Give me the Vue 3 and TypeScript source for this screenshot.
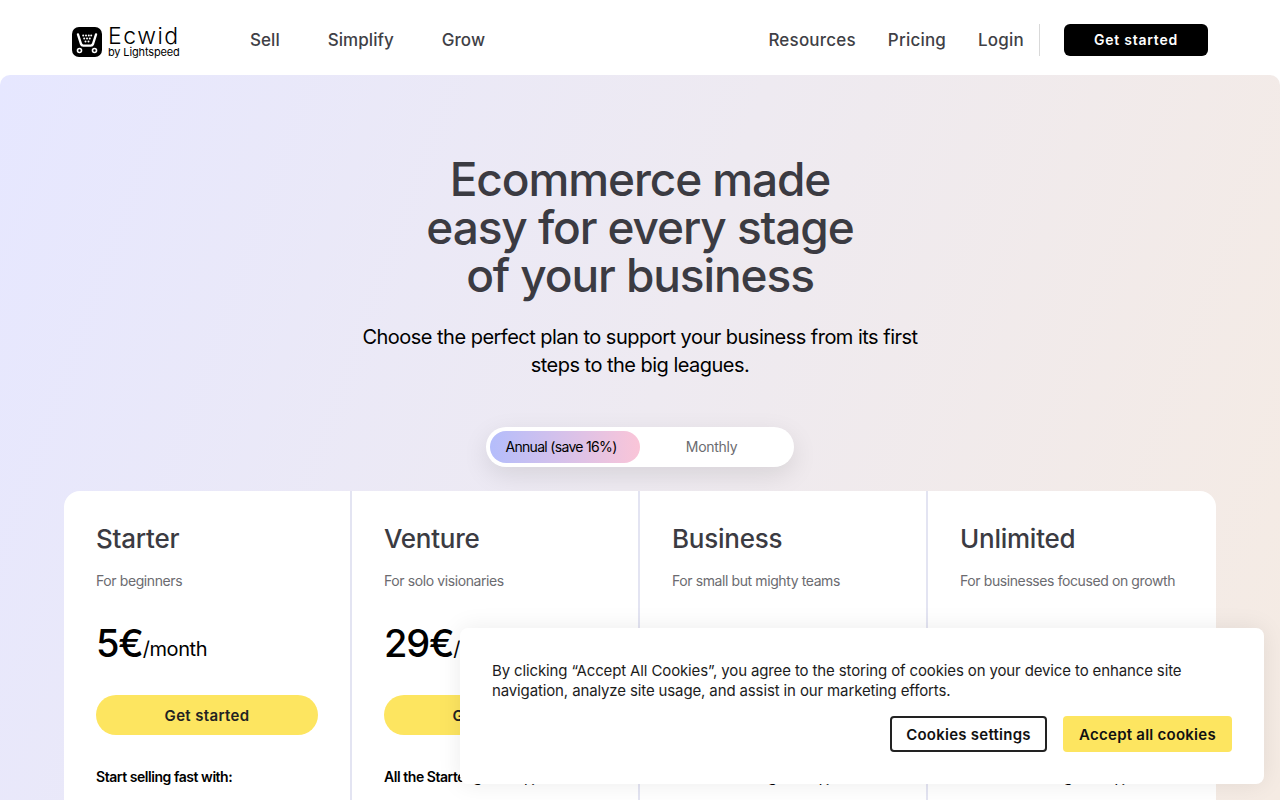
<script setup lang="ts">
interface Plan {
  name: string
  tagline: string
  price: string
  lead: string
}

const plans: Plan[] = [
  { name: 'Starter', tagline: 'For beginners', price: '5€', lead: 'Start selling fast with:' },
  { name: 'Venture', tagline: 'For solo visionaries', price: '29€', lead: 'All the Starter goodies, plus:' },
  { name: 'Business', tagline: 'For small but mighty teams', price: '79€', lead: 'All the Venture goodies, plus:' },
  { name: 'Unlimited', tagline: 'For businesses focused on growth', price: '149€', lead: 'All the Business goodies, plus:' },
]

const leftNav = ['Sell', 'Simplify', 'Grow']
const rightNav = ['Resources', 'Pricing', 'Login']
</script>

<template>
  <div class="page">
    <header class="topbar">
      <a class="logo">
        <svg class="logo-icon" width="30" height="30" viewBox="0 0 30 30">
          <rect width="30" height="30" rx="7" fill="#000" />
          <path d="M6 7.5l3 9.5c.4 1.1 1 1.6 2.2 1.6h7.6c1.2 0 1.8-.5 2.2-1.6l3-9.5" fill="none" stroke="#fff" stroke-width="2.4" stroke-linecap="round" stroke-linejoin="round" />
          <g fill="#fff">
            <circle cx="11.2" cy="8.5" r="1" />
            <circle cx="14" cy="8.5" r="1" />
            <circle cx="16.8" cy="8.5" r="1" />
            <circle cx="19.2" cy="8.5" r="1" />
            <circle cx="12.2" cy="11.5" r="1" />
            <circle cx="15" cy="11.5" r="1" />
            <circle cx="17.8" cy="11.5" r="1" />
            <circle cx="13.5" cy="14.5" r="1" />
            <circle cx="16.5" cy="14.5" r="1" />
          </g>
          <circle cx="7.5" cy="23.5" r="2" fill="none" stroke="#fff" stroke-width="1.6" />
          <circle cx="22.5" cy="23.5" r="2" fill="none" stroke="#fff" stroke-width="1.6" />
        </svg>
        <span class="logo-text">
          <span class="logo-name">Ecwid</span>
          <span class="logo-by">by Lightspeed</span>
        </span>
      </a>
      <nav class="nav nav-left">
        <a v-for="item in leftNav" :key="item">{{ item }}</a>
      </nav>
      <nav class="nav nav-right">
        <a v-for="item in rightNav" :key="item">{{ item }}</a>
      </nav>
      <span class="divider"></span>
      <button class="start-btn">Get started</button>
    </header>

    <main class="hero">
      <h1>Ecommerce made<br>easy for every stage<br>of your business</h1>
      <p class="subtitle">Choose the perfect plan to support your business from its first<br>steps to the big leagues.</p>

      <div class="toggle">
        <span class="toggle-opt active">Annual (save 16%)</span>
        <span class="toggle-opt">Monthly</span>
      </div>

      <section class="plans">
        <article v-for="plan in plans" :key="plan.name" class="plan">
          <h2>{{ plan.name }}</h2>
          <p class="tagline">{{ plan.tagline }}</p>
          <div class="price"><strong>{{ plan.price }}</strong>/month</div>
          <button class="plan-btn">Get started</button>
          <p class="lead">{{ plan.lead }}</p>
        </article>
      </section>
    </main>

    <aside class="cookies">
      <p>By clicking “Accept All Cookies”, you agree to the storing of cookies on your device to enhance site navigation, analyze site usage, and assist in our marketing efforts.</p>
      <div class="cookie-actions">
        <button class="cookie-btn outline">Cookies settings</button>
        <button class="cookie-btn accept">Accept all cookies</button>
      </div>
    </aside>
  </div>
</template>

<style>
html, body { margin: 0; background: #fff; overflow: hidden; }
</style>

<style scoped>
.page {
  position: relative;
  height: 800px;
  overflow: hidden;
  font-family: Inter, "Liberation Sans", sans-serif;
  color: #000;
}

.topbar {
  display: flex;
  align-items: center;
  height: 75px;
  padding: 5px 72px 0;
  box-sizing: border-box;
}

.logo {
  display: flex;
  align-items: center;
  gap: 6px;
  width: 178px;
  flex-shrink: 0;
  margin-top: 4px;
}

.logo-text {
  display: flex;
  flex-direction: column;
}

.logo-name {
  font: 300 23px/20px Inter, sans-serif;
  letter-spacing: 1.5px;
}

.logo-by {
  font: 400 11px/12px Inter, sans-serif;
  letter-spacing: -0.15px;
}

.nav {
  display: flex;
  gap: 32px;
  font: 500 17px/24px Inter, sans-serif;
  letter-spacing: 0.2px;
  color: #3f3f46;
}

.nav-left { gap: 48px; letter-spacing: 0.05px; }
.nav-right { margin-left: auto; }

.divider {
  width: 1px;
  height: 32px;
  margin: 0 24px 0 15px;
  background: #d9d9d9;
}

.start-btn {
  width: 144px;
  height: 32px;
  padding: 0 0 1px;
  border: 0;
  border-radius: 6px;
  background: #000;
  color: #fff;
  font: 600 14px Inter, sans-serif;
  letter-spacing: 0.75px;
}

.hero {
  height: 725px;
  box-sizing: border-box;
  padding-top: 80px;
  border-radius: 10px 10px 0 0;
  background: linear-gradient(110deg, #e6e7ff 0%, #eeeaf1 50%, #f5ebe3 100%);
  display: flex;
  flex-direction: column;
  align-items: center;
}

h1 {
  margin: 0;
  font: 500 46px/48px Inter, sans-serif;
  letter-spacing: -1.1px;
  color: #3b3b42;
  text-align: center;
}

.subtitle {
  margin: 24px 0 0;
  font-size: 20px;
  line-height: 28px;
  text-align: center;
  letter-spacing: -0.52px;
}

.toggle {
  display: flex;
  width: 308px;
  height: 40px;
  margin-top: 48px;
  padding: 4px 11px 4px 4px;
  box-sizing: border-box;
  border-radius: 20px;
  background: #fff;
  box-shadow: 0 8px 26px rgba(0, 0, 0, 0.1);
}

.toggle-opt {
  flex: 1;
  display: flex;
  align-items: center;
  justify-content: center;
  padding-bottom: 1px;
  border-radius: 16px;
  font-size: 14px;
  letter-spacing: -0.3px;
  color: #6b6b70;
}

.toggle-opt.active {
  flex: 0 0 150px;
  padding-right: 8px;
  box-sizing: border-box;
  color: #000;
  letter-spacing: -0.68px;
  background: linear-gradient(90deg, #b4bdfb, #fac5d8);
}

.plans {
  display: grid;
  grid-template-columns: repeat(4, 1fr);
  width: 1152px;
  margin-top: 24px;
  flex: 1;
  border-radius: 16px 16px 0 0;
  background: #fff;
  overflow: hidden;
}

.plan {
  padding: 32px 32px 0;
  box-sizing: border-box;
  border-right: 2px solid #e3e4f2;
  min-width: 0;
}

.plan:last-child { border-right: 0; }

h2 {
  margin: 0;
  font: 500 26px/32px Inter, sans-serif;
  letter-spacing: -0.25px;
  color: #3b3b42;
}

.tagline {
  margin: 16px 0 0;
  font-size: 14px;
  line-height: 20px;
  letter-spacing: -0.4px;
  white-space: nowrap;
  color: #6b6b70;
}

.price {
  margin-top: 28px;
  height: 48px;
  font-size: 20px;
  line-height: 47px;
  letter-spacing: -0.4px;
  white-space: nowrap;
}

.price strong {
  position: relative;
  top: 1px;
  font: 500 38px/47px Inter, sans-serif;
  letter-spacing: -1.2px;
}

.plan-btn {
  display: block;
  width: 222px;
  height: 40px;
  margin-top: 28px;
  border: 0;
  border-radius: 20px;
  background: #fde560;
  color: #222;
  font: 600 15px Inter, sans-serif;
  letter-spacing: 0.35px;
}

.lead {
  margin: 32px 0 0;
  font-size: 14px;
  line-height: 20px;
  font-weight: 600;
  letter-spacing: -0.45px;
}

.cookies {
  position: absolute;
  left: 460px;
  top: 628px;
  width: 804px;
  height: 156px;
  box-sizing: border-box;
  padding: 32px;
  border-radius: 8px;
  background: #fff;
  box-shadow: 0 0 24px rgba(0, 0, 0, 0.08);
}

.cookies p {
  margin: 0;
  padding-top: 1px;
  font: 400 15px/20px Inter, sans-serif;
  letter-spacing: -0.13px;
  color: #1c1c1c;
}

.cookie-actions {
  display: flex;
  justify-content: flex-end;
  gap: 16px;
  margin-top: 15px;
}

.cookie-btn {
  height: 36px;
  box-sizing: border-box;
  border-radius: 4px;
  font: 600 15px Inter, sans-serif;
  letter-spacing: 0.25px;
  color: #111;
}

.outline {
  width: 157px;
  border: 2px solid #222;
  background: #fff;
}

.accept {
  width: 169px;
  border: 0;
  background: #fde560;
}
</style>
